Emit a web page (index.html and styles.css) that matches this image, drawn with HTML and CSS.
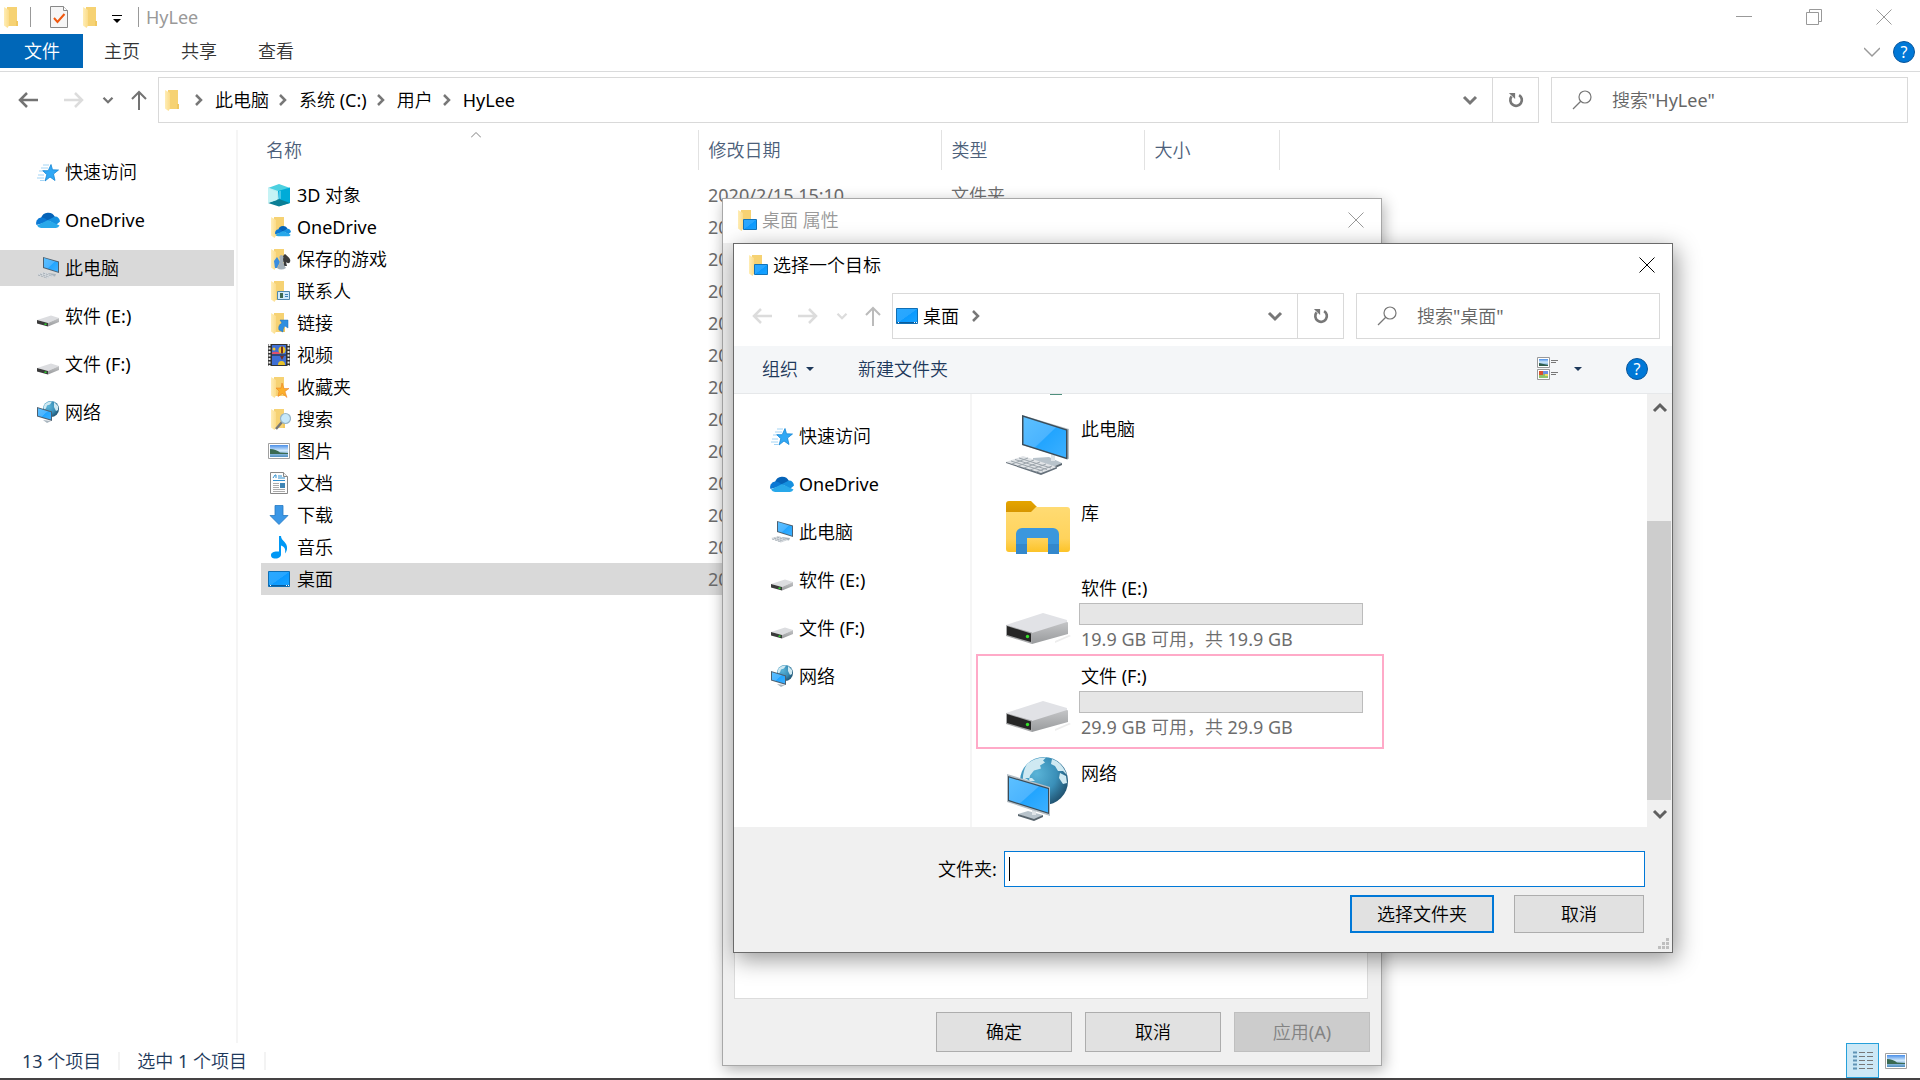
FILE: index.html
```html
<!DOCTYPE html>
<html lang="zh-CN">
<head>
    <meta charset="UTF-8">
    <meta name="viewport" content="width=device-width, initial-scale=1.0">
    <title>HyLee</title>
    <link rel="stylesheet" href="styles.css">
</head>
<body>
    <!-- Icon sprite -->
    <svg class="sprite" aria-hidden="true">
        <defs>
            <linearGradient id="g-screen" x1="0" y1="0" x2="1" y2="1">
                <stop offset="0" stop-color="#5cc0ff"/>
                <stop offset=".5" stop-color="#4bb4ff"/>
                <stop offset=".52" stop-color="#22a5ff"/>
                <stop offset="1" stop-color="#3db0ff"/>
            </linearGradient>
            <linearGradient id="g-desk" x1="0" y1="0" x2="1" y2="1">
                <stop offset="0" stop-color="#2ba9ff"/>
                <stop offset=".5" stop-color="#27a6ff"/>
                <stop offset=".52" stop-color="#0b9aff"/>
                <stop offset="1" stop-color="#1aa3ff"/>
            </linearGradient>
            <linearGradient id="g-folder" x1="0" y1="0" x2="0" y2="1">
                <stop offset="0" stop-color="#ffdb73"/>
                <stop offset=".7" stop-color="#ffd35c"/>
                <stop offset="1" stop-color="#fcc328"/>
            </linearGradient>
            <linearGradient id="g-tab" x1="0" y1="0" x2="0" y2="1">
                <stop offset="0" stop-color="#e5a500"/>
                <stop offset="1" stop-color="#d19000"/>
            </linearGradient>
            <linearGradient id="g-flap" x1="0" y1="0" x2="1" y2="0">
                <stop offset="0" stop-color="#ffedb5"/>
                <stop offset="1" stop-color="#fbdc8a"/>
            </linearGradient>
            <linearGradient id="g-side" x1="0" y1="0" x2="0" y2="1">
                <stop offset="0" stop-color="#c4c5c7"/>
                <stop offset="1" stop-color="#989a9c"/>
            </linearGradient>
            <radialGradient id="g-globe" cx=".35" cy=".35" r=".75">
                <stop offset="0" stop-color="#5ab4d8"/>
                <stop offset=".55" stop-color="#3a8fb8"/>
                <stop offset="1" stop-color="#1d4a66"/>
            </radialGradient>
            <linearGradient id="g-sky" x1="0" y1="0" x2="0" y2="1">
                <stop offset="0" stop-color="#4a8fe8"/>
                <stop offset=".45" stop-color="#cfe8fb"/>
                <stop offset="1" stop-color="#4f8fc0"/>
            </linearGradient>
        </defs>
        <symbol id="i-folder" viewBox="0 0 24 24">
            <path d="M7 2h10v19H7z" fill="#f6d273"/>
            <path d="M16 16h2v5h-2z" fill="#f0c75f"/>
            <path d="M4 2l5 3v15.500L7.500 23 4 20.500z" fill="url(#g-flap)"/>
        </symbol>
        <symbol id="i-cloud" viewBox="0 0 24 24">
            <path d="M5 10a7.500 7.500 0 0 1 14-1l-7 5z" fill="#0563b8"/>
            <path d="M5 9.500a5.500 5.500 0 0 0-4.500 7.500L13 13.500 9 10.500A7 7 0 0 0 5 9.500z" fill="#0a78d4"/>
            <path d="M12 12l7-3.500c3 0 4.600 2 5 5L20 17z" fill="#1590df"/>
            <path d="M1 17.500L12 12l11.500 5.500A4 4 0 0 1 20 20H5a5 5 0 0 1-4-2.500z" fill="#28a8ea"/>
        </symbol>
        <symbol id="i-star" viewBox="0 0 24 24">
            <path d="M7 5h6M5 8h7M3 11h6M2 15h6M1 18h7M4 20.500h4" stroke="#8cc9f2" stroke-width=".8"/>
            <path d="M15 4.500l1.500 5.300 6 .2-5 4 1.500 6.500-5-3.500-5 4 1.800-6.300-4-4h5.400z" fill="#30a8f5" stroke="#1587d4" stroke-width=".8"/>
        </symbol>
        <symbol id="i-pc" viewBox="0 0 24 24">
            <path d="M12 17l8 1-1 2.500-7-1.500z" fill="#aab4bc"/>
            <path d="M7 1l16 4.500V17L7 12z" fill="#4d6070"/>
            <path d="M8 2l14 4.300v9.400L8 11.200z" fill="url(#g-screen)"/>
            <path d="M1 18l8-2 9 4-7 2.500z" fill="#d6dade"/>
            <path d="M2 19l9 3M4 18l9 3M7 17l9 3" stroke="#98a2ab" stroke-width=".8" stroke-dasharray="2 1"/>
        </symbol>
        <symbol id="i-drive" viewBox="0 0 24 24">
            <path d="M1 16l14-4.500 8 2.500-11 5z" fill="#dcdde0"/>
            <path d="M12 19l11-5v4L12 22.500z" fill="url(#g-side)"/>
            <path d="M1 16l11 3v3.500L1 19.500z" fill="#3a3a3a"/>
            <path d="M8.500 19.500h2V21h-2z" fill="#2bd42b"/>
        </symbol>
        <symbol id="i-net" viewBox="0 0 24 24">
            <circle cx="15" cy="9" r="8" fill="url(#g-globe)"/>
            <path d="M9 4q3-3 7-2.500l-2 3-3 1-1 3-2 1q-1-3 1-5.500zM18 2l4 4v4l-2 1-2-4z" fill="#cfe9f2"/>
            <path d="M7 20l8 1-4 2z" fill="#a9b5be"/>
            <path d="M1 7l15 4.500V21L1 16.500z" fill="#4d6070"/>
            <path d="M2 8.300l13 4v7.300L2 15.700z" fill="url(#g-screen)"/>
        </symbol>
        <symbol id="i-cube" viewBox="0 0 24 24">
            <path d="M12 1l11 4-11 4L1 5z" fill="#4cd0e0"/>
            <path d="M1 4.500L11 8v11L1 20z" fill="#b8eef2"/>
            <path d="M11 8l12-3.500V20l-11 3z" fill="#00abd8"/>
            <path d="M1 20l11-4 11 4-11 3.500z" fill="#0a7f96"/>
            <path d="M1 5l9 4v8l-9 3z" fill="#c6f3f5"/>
            <path d="M12 8l2 0v8l-2-.500z" fill="#47c7e8"/>
        </symbol>
        <symbol id="i-chess" viewBox="0 0 24 24">
            <path d="M18 7c5 4 6 6 5 8-1 2-3 1-4 0l1 4h-4l1-4c-4 1-5-3 1-8z" fill="#3c3c3c"/>
            <path d="M7 14l3-4 3 5-3 6-2 0z" fill="#3a8ee0"/>
            <path d="M14 8a2.500 2.500 0 0 1 2 4l1 6 2 3q-5 3-9 0l2-3 1-6a2.500 2.500 0 0 1 1-4z" fill="#a3afb8"/>
        </symbol>
        <symbol id="i-card" viewBox="0 0 24 24">
            <path d="M10.500 12.500h12v8h-12z" fill="#cfeafb" stroke="#5088ac"/>
            <path d="M13 14h3v5h-3z" fill="#3e6a52"/>
            <path d="M18 15.500h3M18 17.500h3" stroke="#3f84b8"/>
        </symbol>
        <symbol id="i-link" viewBox="0 0 24 24">
            <path d="M13 9h8v8l-3-2c-2 2-2 4-2 6l-4-2c-1-4 1-6 3-7z" fill="#2f8fe0" stroke="#1c6cb8" stroke-width=".5"/>
        </symbol>
        <symbol id="i-favstar" viewBox="0 0 24 24">
            <path d="M15 8l2 5.500h5l-4 3 2 6-4.500-4-4.500 3 1-5.500-3-3 5 0z" fill="#fbb02c" stroke="#e8741c" stroke-width=".5"/>
        </symbol>
        <symbol id="i-lens" viewBox="0 0 24 24">
            <path d="M15 15l-6 7" stroke="#777" stroke-width="2.500"/>
            <circle cx="18.500" cy="11.500" r="5" fill="#c7e8fa" stroke="#96b4c6" stroke-width="1.200"/>
        </symbol>
        <symbol id="i-film" viewBox="0 0 24 24">
            <path d="M1 1h22v22H1z" fill="#333"/>
            <path d="M2.500 1v22M21.500 1v22" stroke="#eee" stroke-width="2" stroke-dasharray="2 1.500"/>
            <path d="M5 2h14v20H5z" fill="#3f6fd4"/>
            <path d="M5 12h14" stroke="#222"/>
            <path d="M5 9.500q3-1.500 8 0V11H5z" fill="#e0506c"/>
            <circle cx="15" cy="7" r="3.500" fill="#e8c32c"/>
            <path d="M14 3.500h2v7h-2zM13 13h4l-2 4z" fill="#7a3020"/>
            <circle cx="7" cy="6" r="1.500" fill="#f2c430"/>
            <path d="M11 22a3.500 4 0 0 1 7 0z" fill="#e8c32c"/>
        </symbol>
        <symbol id="i-picture" viewBox="0 0 24 24">
            <path d="M1.500 4.500h21v15h-21z" fill="#fff" stroke="#a0a0a0"/>
            <path d="M3 6h18v12H3z" fill="url(#g-sky)"/>
            <path d="M3 10q6 0 10 3.500 4 0 8 .5v1H3z" fill="#3a6a52"/>
        </symbol>
        <symbol id="i-doc" viewBox="0 0 24 24">
            <path d="M3.500 1.500h13l4 4v17h-17z" fill="#fdfdfd" stroke="#888"/>
            <path d="M16.500 1.500v4h4" fill="#eee" stroke="#888"/>
            <path d="M6 7l2-3h1v3M11 5h4M11 7h7M6 9.500h12" stroke="#2f8fcf" fill="none"/>
            <path d="M6 12.500h6M6 14.500h6M6 16.500h6M6 18.500h12M6 20.500h12" stroke="#aaa"/>
            <path d="M13 12h5v5h-5z" fill="#3f85b5"/>
        </symbol>
        <symbol id="i-download" viewBox="0 0 24 24">
            <path d="M8 2.500h8v10h5L12 21.500 3 12.500h5z" fill="#3b97e6" stroke="#2678c2" stroke-width=".8"/>
        </symbol>
        <symbol id="i-music" viewBox="0 0 24 24">
            <path d="M12 1h2c0 5 7 6 6 13-.300 2-1.300 4-2 4.500 1-5-1-7-4-8v9c0 2-2 4-5.500 4S4 22 4 20s2.500-3.500 6-3.500h2z" fill="#0098f5"/>
        </symbol>
        <symbol id="i-desktop" viewBox="0 0 24 24">
            <path d="M1.500 4.500h21v15h-21z" fill="url(#g-desk)" stroke="#0f6fb5"/>
            <path d="M2 18.500h20" stroke="#0a5c9c"/>
            <path d="M3 18.500h1M19 18.500h1M21 18.500h1" stroke="#fff"/>
        </symbol>
        <symbol id="i-deskfolder" viewBox="0 0 24 24">
            <use href="#i-folder"/>
            <path d="M9.500 11.500h13v10h-13z" fill="url(#g-desk)" stroke="#1274ba"/>
        </symbol>
        <symbol id="i-check" viewBox="0 0 24 24">
            <path d="M3.500 1.500h13l4 4v17h-17z" fill="#f6f6f6" stroke="#888"/>
            <path d="M16.500 1.500v4h4" fill="#fff" stroke="#888"/>
            <path d="M7 13l3.500 4L17.500 9" fill="none" stroke="#f0580f" stroke-width="2"/>
        </symbol>
        <symbol id="i-back" viewBox="0 0 20 20">
            <path d="M9 3L2 10l7 7M2 10h18" fill="none" stroke="currentColor" stroke-width="2.500"/>
        </symbol>
        <symbol id="i-forward" viewBox="0 0 20 20">
            <path d="M11 3l7 7-7 7M18 10H0" fill="none" stroke="currentColor" stroke-width="2.500"/>
        </symbol>
        <symbol id="i-up" viewBox="0 0 20 20">
            <path d="M3 9l7-7 7 7M10 2v18" fill="none" stroke="currentColor" stroke-width="2"/>
        </symbol>
        <symbol id="i-down" viewBox="0 0 16 16">
            <path d="M2 5l6 6 6-6" fill="none" stroke="currentColor" stroke-width="3"/>
        </symbol>
        <symbol id="i-thin" viewBox="0 0 16 16">
            <path d="M0 4l8 8 8-8" fill="none" stroke="currentColor" stroke-width="1.500"/>
        </symbol>
        <symbol id="i-right" viewBox="0 0 12 12">
            <path d="M3 1l5 5-5 5" fill="none" stroke="currentColor" stroke-width="2.500"/>
        </symbol>
        <symbol id="i-refresh" viewBox="0 0 18 18">
            <path d="M12.500 3.500A6.500 6.500 0 1 1 4 5" fill="none" stroke="currentColor" stroke-width="3"/>
            <path d="M1 1h7v7z" fill="currentColor"/>
        </symbol>
        <symbol id="i-search" viewBox="0 0 20 20">
            <circle cx="13" cy="7" r="6" fill="none" stroke="currentColor" stroke-width="1.200"/>
            <path d="M9 11l-8 8" stroke="currentColor" stroke-width="1.200"/>
        </symbol>
        <symbol id="i-close" viewBox="0 0 16 16">
            <path d="M.5.5l15 15M15.500.5l-15 15" stroke="currentColor"/>
        </symbol>
        <symbol id="i-restore" viewBox="0 0 16 16">
            <path d="M.5 3.500h12v12H.5zM3.500 3V.5h12v12H13" fill="none" stroke="currentColor"/>
        </symbol>
        <symbol id="i-min" viewBox="0 0 16 16">
            <path d="M0 7.500h16" stroke="currentColor"/>
        </symbol>
        <symbol id="i-caret" viewBox="0 0 8 4">
            <path d="M0 0h8L4 4z" fill="currentColor"/>
        </symbol>
        <symbol id="i-pc-big" viewBox="0 0 66 66">
            <path d="M28 46l16-1 13 6-9 5-20-5z" fill="#b8c3cb"/>
            <path d="M28 49l20 6 9-4v2l-9 4-20-6z" fill="#59656e"/>
            <path d="M46 42l4 1v6h-4z" fill="#dfe4e8"/>
            <path d="M17 3l47 14v30L17 33z" fill="#b7c0c7"/>
            <path d="M17 3l45.500 14.500v30L17 33z" fill="#3b4c58"/>
            <path d="M18.500 5L61 18.500v27L18.500 32z" fill="url(#g-screen)"/>
            <path d="M1 50l17-6 34 11-16 7z" fill="#e1e4e7"/>
            <path d="M1 50l35 11 16-6v1.500l-16 6.500-35-12z" fill="#66717b"/>
            <path d="M6 49l32 10M10 47.500l32 10M14 46l32 10M7 52l16-6M13 54l16-6M19 56l16-6M25 58l16-6M31 60l16-6" stroke="#9ca5ac" stroke-width="1"/>
        </symbol>
        <symbol id="i-lib" viewBox="0 0 66 66">
            <path d="M1 8a3 3 0 0 1 3-3h22l6 6-4 9H1z" fill="url(#g-tab)"/>
            <path d="M1 16h25l5-5h31a3 3 0 0 1 3 3v39a3 3 0 0 1-3 3H4a3 3 0 0 1-3-3z" fill="url(#g-folder)"/>
            <path d="M11 58V38a6 6 0 0 1 6-6h31a6 6 0 0 1 6 6v20H43V42H22v16z" fill="#3b97dd"/>
            <path d="M11 48h11v10H11zM43 48h11v10H43z" fill="#3488cc"/>
        </symbol>
        <symbol id="i-drive-big" viewBox="0 0 66 66">
            <path d="M50 45l14-6 2 1-16 7z" fill="#ededed"/>
            <path d="M1 29l37-12 24 7v5L27 38z" fill="#e1e2e6"/>
            <path d="M27 37l35-11q1 0 1 1v11L27 48z" fill="url(#g-side)"/>
            <path d="M1 29l26 7.500V48L1 40z" fill="#a8a9ab"/>
            <path d="M2 30l24 7.500V46L2 39z" fill="#262626"/>
            <circle cx="22.500" cy="40.500" r="1.700" fill="#35e02a"/>
        </symbol>
        <symbol id="i-net-big" viewBox="0 0 66 66">
            <circle cx="39" cy="25" r="24" fill="url(#g-globe)"/>
            <path d="M22 8Q30 1 41 1.500l-3 3 2 2-5 3 1 3-7 2-4 5-1 5-6 2q-1-10 4-18.500zM47 3q10 3 15 16l-4-4-5 0-3-5-4-2zM55 17l6 3 1 7-4 1-4-6zM20 22l5 3 5 0-3-3z" fill="#cfe9f2"/>
            <path d="M13 58l10-3 15 4-9 5z" fill="#b8c3cb"/>
            <path d="M13 58l16 5 9-4v2l-9 4-16-5z" fill="#59656e"/>
            <path d="M27 53l4 1v5h-4z" fill="#dfe4e8"/>
            <path d="M2 18l43 13v29L2 46z" fill="#b7c0c7"/>
            <path d="M3 20l41 12v26L3 45z" fill="#3b4c58"/>
            <path d="M4 21.500L43 33v23.500L4 44z" fill="url(#g-screen)"/>
        </symbol>
        <symbol id="i-view" viewBox="0 0 22 24">
            <path d="M.5.5h12v10H.5zM.5 12.500h12v10H.5z" fill="#fff" stroke="#999"/>
            <path d="M2 2h9v7H2z" fill="url(#g-sky)"/>
            <path d="M2 6l9 2v1H2z" fill="#2f5d4c"/>
            <path d="M2 14h9v7H2z" fill="#8fc46a"/>
            <path d="M2 14h4v4H2z" fill="#d8532c"/>
            <path d="M6 14h5v3H6z" fill="#6f8fe0"/>
            <path d="M8 17h3v2H8z" fill="#f4d860"/>
            <path d="M14 3.500h7M14 5.500h5M14 15.500h7M14 17.500h5" stroke="#777"/>
        </symbol>
        <symbol id="i-details" viewBox="0 0 24 24">
            <path d="M2 3.500h4M2 7.500h4M2 11.500h4M2 15.500h4M2 19.500h4" stroke="#5f93b5" stroke-width="2"/>
            <path d="M8 3.500h6M8 7.500h6M8 11.500h6M8 15.500h6M8 19.500h6M16 3.500h6M16 7.500h6M16 11.500h6M16 15.500h6M16 19.500h6" stroke="#777"/>
        </symbol>
    </svg>

    <div class="explorer">
        <header class="titlebar">
            <svg class="icon"><use href="#i-folder"/></svg>
            <span class="bar-sep"></span>
            <button class="quick" aria-label="属性"><svg class="icon"><use href="#i-check"/></svg></button>
            <button class="quick" aria-label="新建文件夹"><svg class="icon"><use href="#i-folder"/></svg></button>
            <button class="quick customize" aria-label="自定义"><svg class="caret-icon"><use href="#i-caret"/></svg></button>
            <span class="bar-sep"></span>
            <h1 class="title">HyLee</h1>
            <div class="window-buttons">
                <button aria-label="最小化"><svg class="glyph"><use href="#i-min"/></svg></button>
                <button aria-label="还原"><svg class="glyph"><use href="#i-restore"/></svg></button>
                <button aria-label="关闭"><svg class="glyph"><use href="#i-close"/></svg></button>
            </div>
        </header>

        <nav class="ribbon">
            <a class="file-tab" href="#">文件</a>
            <a href="#">主页</a>
            <a href="#">共享</a>
            <a href="#">查看</a>
            <div class="ribbon-right">
                <button class="expand" aria-label="展开功能区"><svg class="glyph"><use href="#i-thin"/></svg></button>
                <button class="help">?</button>
            </div>
        </nav>

        <div class="navbar">
            <div class="nav-buttons">
                <button aria-label="返回"><svg class="arrow"><use href="#i-back"/></svg></button>
                <button class="off" aria-label="前进"><svg class="arrow"><use href="#i-forward"/></svg></button>
                <button aria-label="最近的位置"><svg class="small-chev"><use href="#i-down"/></svg></button>
                <button aria-label="上移"><svg class="arrow"><use href="#i-up"/></svg></button>
            </div>
            <div class="address">
                <svg class="icon"><use href="#i-folder"/></svg>
                <svg class="crumb-sep"><use href="#i-right"/></svg>
                <a href="#">此电脑</a>
                <svg class="crumb-sep"><use href="#i-right"/></svg>
                <a href="#">系统 (C:)</a>
                <svg class="crumb-sep"><use href="#i-right"/></svg>
                <a href="#">用户</a>
                <svg class="crumb-sep"><use href="#i-right"/></svg>
                <a href="#">HyLee</a>
                <button class="history" aria-label="历史"><svg class="glyph"><use href="#i-down"/></svg></button>
                <button class="refresh" aria-label="刷新"><svg class="glyph"><use href="#i-refresh"/></svg></button>
            </div>
            <label class="search main-search">
                <svg class="lens"><use href="#i-search"/></svg>
                <input type="text" placeholder='搜索"HyLee"' aria-label="搜索">
            </label>
        </div>

        <div class="content">
            <ul class="tree">
                <li><a href="#"><svg class="icon"><use href="#i-star"/></svg>快速访问</a></li>
                <li><a href="#"><svg class="icon"><use href="#i-cloud"/></svg>OneDrive</a></li>
                <li><a class="selected" href="#"><svg class="icon"><use href="#i-pc"/></svg>此电脑</a></li>
                <li><a href="#"><svg class="icon"><use href="#i-drive"/></svg>软件 (E:)</a></li>
                <li><a href="#"><svg class="icon"><use href="#i-drive"/></svg>文件 (F:)</a></li>
                <li><a href="#"><svg class="icon"><use href="#i-net"/></svg>网络</a></li>
            </ul>

            <div class="files">
                <table>
                    <thead>
                        <tr>
                            <th class="col-name">名称<svg class="sort"><use href="#i-thin"/></svg></th>
                            <th class="col-date">修改日期</th>
                            <th class="col-type">类型</th>
                            <th class="col-size">大小</th>
                        </tr>
                    </thead>
                    <tbody>
                        <tr><td><span class="file"><svg class="icon"><use href="#i-cube"/></svg>3D 对象</span></td><td>2020/2/15 15:10</td><td>文件夹</td><td></td></tr>
                        <tr><td><span class="file"><svg class="icon"><use href="#i-folder"/><use href="#i-cloud" x="8" y="8" width="16" height="16"/></svg>OneDrive</span></td><td>2020/2/15 15:10</td><td>文件夹</td><td></td></tr>
                        <tr><td><span class="file"><svg class="icon"><use href="#i-folder"/><use href="#i-chess"/></svg>保存的游戏</span></td><td>2020/2/15 15:10</td><td>文件夹</td><td></td></tr>
                        <tr><td><span class="file"><svg class="icon"><use href="#i-folder"/><use href="#i-card"/></svg>联系人</span></td><td>2020/2/15 15:10</td><td>文件夹</td><td></td></tr>
                        <tr><td><span class="file"><svg class="icon"><use href="#i-folder"/><use href="#i-link"/></svg>链接</span></td><td>2020/2/15 15:10</td><td>文件夹</td><td></td></tr>
                        <tr><td><span class="file"><svg class="icon"><use href="#i-film"/></svg>视频</span></td><td>2020/2/15 15:10</td><td>文件夹</td><td></td></tr>
                        <tr><td><span class="file"><svg class="icon"><use href="#i-folder"/><use href="#i-favstar"/></svg>收藏夹</span></td><td>2020/2/15 15:10</td><td>文件夹</td><td></td></tr>
                        <tr><td><span class="file"><svg class="icon"><use href="#i-folder"/><use href="#i-lens"/></svg>搜索</span></td><td>2020/2/15 15:10</td><td>文件夹</td><td></td></tr>
                        <tr><td><span class="file"><svg class="icon"><use href="#i-picture"/></svg>图片</span></td><td>2020/2/15 15:10</td><td>文件夹</td><td></td></tr>
                        <tr><td><span class="file"><svg class="icon"><use href="#i-doc"/></svg>文档</span></td><td>2020/2/15 15:10</td><td>文件夹</td><td></td></tr>
                        <tr><td><span class="file"><svg class="icon"><use href="#i-download"/></svg>下载</span></td><td>2020/2/15 15:10</td><td>文件夹</td><td></td></tr>
                        <tr><td><span class="file"><svg class="icon"><use href="#i-music"/></svg>音乐</span></td><td>2020/2/15 15:10</td><td>文件夹</td><td></td></tr>
                        <tr class="selected"><td><span class="file"><svg class="icon"><use href="#i-desktop"/></svg>桌面</span></td><td>2020/2/15 15:10</td><td>文件夹</td><td></td></tr>
                    </tbody>
                </table>
            </div>
        </div>

        <footer class="statusbar">
            <span class="status">13 个项目</span>
            <span class="status">选中 1 个项目</span>
            <div class="view-buttons">
                <button class="active" aria-label="详细信息"><svg class="icon"><use href="#i-details"/></svg></button>
                <button aria-label="大图标"><svg class="icon"><use href="#i-picture"/></svg></button>
            </div>
        </footer>
    </div>

    <!-- Properties window -->
    <section class="window properties">
        <header class="window-title">
            <svg class="icon"><use href="#i-deskfolder"/></svg>
            <h2>桌面 属性</h2>
            <button class="close" aria-label="关闭"><svg class="glyph"><use href="#i-close"/></svg></button>
        </header>
        <div class="properties-body">
            <div class="panel"></div>
            <div class="properties-buttons">
                <button class="btn">确定</button>
                <button class="btn">取消</button>
                <button class="btn" disabled>应用(A)</button>
            </div>
        </div>
    </section>

    <!-- Folder picker -->
    <section class="window picker">
        <header class="window-title">
            <svg class="icon"><use href="#i-deskfolder"/></svg>
            <h2>选择一个目标</h2>
            <button class="close" aria-label="关闭"><svg class="glyph"><use href="#i-close"/></svg></button>
        </header>

        <div class="navbar">
            <div class="nav-buttons">
                <button class="off" aria-label="返回"><svg class="arrow"><use href="#i-back"/></svg></button>
                <button class="off" aria-label="前进"><svg class="arrow"><use href="#i-forward"/></svg></button>
                <button class="off" aria-label="最近的位置"><svg class="small-chev"><use href="#i-down"/></svg></button>
                <button class="dim" aria-label="上移"><svg class="arrow"><use href="#i-up"/></svg></button>
            </div>
            <div class="address">
                <svg class="icon"><use href="#i-desktop"/></svg>
                <a href="#">桌面</a>
                <svg class="crumb-sep"><use href="#i-right"/></svg>
                <button class="history" aria-label="历史"><svg class="glyph"><use href="#i-down"/></svg></button>
                <button class="refresh" aria-label="刷新"><svg class="glyph"><use href="#i-refresh"/></svg></button>
            </div>
            <label class="search">
                <svg class="lens"><use href="#i-search"/></svg>
                <input type="text" placeholder='搜索"桌面"' aria-label="搜索">
            </label>
        </div>

        <div class="toolbar">
            <button class="organize">组织<svg class="caret-icon"><use href="#i-caret"/></svg></button>
            <button>新建文件夹</button>
            <div class="toolbar-right">
                <button class="view-menu" aria-label="更改视图"><svg class="view-icon"><use href="#i-view"/></svg><svg class="caret-icon"><use href="#i-caret"/></svg></button>
                <button class="help">?</button>
            </div>
        </div>

        <div class="picker-body">
            <ul class="tree">
                <li><a href="#"><svg class="icon"><use href="#i-star"/></svg>快速访问</a></li>
                <li><a href="#"><svg class="icon"><use href="#i-cloud"/></svg>OneDrive</a></li>
                <li><a href="#"><svg class="icon"><use href="#i-pc"/></svg>此电脑</a></li>
                <li><a href="#"><svg class="icon"><use href="#i-drive"/></svg>软件 (E:)</a></li>
                <li><a href="#"><svg class="icon"><use href="#i-drive"/></svg>文件 (F:)</a></li>
                <li><a href="#"><svg class="icon"><use href="#i-net"/></svg>网络</a></li>
            </ul>
            <div class="tiles">
                <span class="tile-above"></span>
                <div class="tile">
                    <svg class="big-icon"><use href="#i-pc-big"/></svg>
                    <p>此电脑</p>
                </div>
                <div class="tile">
                    <svg class="big-icon"><use href="#i-lib"/></svg>
                    <p>库</p>
                </div>
                <div class="tile drive">
                    <svg class="big-icon"><use href="#i-drive-big"/></svg>
                    <div>
                        <p>软件 (E:)</p>
                        <div class="usage"></div>
                        <p class="free">19.9 GB 可用，共 19.9 GB</p>
                    </div>
                </div>
                <div class="tile drive marked">
                    <svg class="big-icon"><use href="#i-drive-big"/></svg>
                    <div>
                        <p>文件 (F:)</p>
                        <div class="usage"></div>
                        <p class="free">29.9 GB 可用，共 29.9 GB</p>
                    </div>
                </div>
                <div class="tile">
                    <svg class="big-icon"><use href="#i-net-big"/></svg>
                    <p>网络</p>
                </div>
            </div>
            <div class="scrollbar">
                <button aria-label="向上"><svg class="glyph flip"><use href="#i-down"/></svg></button>
                <div class="thumb"></div>
                <button aria-label="向下"><svg class="glyph"><use href="#i-down"/></svg></button>
            </div>
        </div>

        <div class="picker-footer">
            <div class="folder-row">
                <label for="folder">文件夹:</label>
                <div class="folder-box"><input type="text" id="folder"></div>
            </div>
            <div class="picker-buttons">
                <button class="btn primary">选择文件夹</button>
                <button class="btn">取消</button>
            </div>
            <svg class="grip" viewBox="0 0 12 12"><path d="M8 0h3v3H8zM4 4h3v3H4zM8 4h3v3H8zM0 8h3v3H0zM4 8h3v3H4zM8 8h3v3H8z" fill="#bfbfbf"/></svg>
        </div>
    </section>
</body>
</html>
```
FILE: styles.css
```css
*, *::before, *::after {
    box-sizing: border-box;
}
body {
    margin: 0;
    font-family: 'Noto Sans', 'Noto Sans CJK SC DemiLight', 'Noto Sans CJK SC', sans-serif;
    font-size: 18px;
    font-weight: 400;
    line-height: 24px;
    color: #000;
    background-color: #fff;
    overflow: hidden;
}
h1, h2, p, ul {
    margin: 0;
    padding: 0;
    font-size: 18px;
    font-weight: 400;
}
ul {
    list-style: none;
}
a {
    color: inherit;
    text-decoration: none;
}
button, input {
    font: inherit;
    color: inherit;
    margin: 0;
    padding: 0;
    border: none;
    border-radius: 0;
    background: none;
}
button {
    display: flex;
    align-items: center;
    justify-content: center;
}
svg {
    display: block;
    flex-shrink: 0;
}
.sprite {
    position: absolute;
    width: 0;
    height: 0;
}
.icon {
    width: 24px;
    height: 24px;
}
.glyph {
    width: 16px;
    height: 16px;
}
.arrow, .lens {
    width: 20px;
    height: 20px;
}
.small-chev {
    width: 12px;
    height: 12px;
}
.caret-icon {
    width: 8px;
    height: 4px;
}

/* Explorer window */
.explorer {
    display: flex;
    flex-direction: column;
    min-height: 100vh;
    border-bottom: 2px solid #454344;
}
.titlebar {
    display: flex;
    align-items: center;
    height: 34px;
}
.bar-sep {
    width: 1px;
    height: 20px;
    margin-left: 6px;
    background-color: #999;
}
.quick {
    margin-left: 16px;
}
.quick + .quick {
    margin-left: 8px;
}
.quick.customize {
    width: 10px;
    margin: 4px 10px 0 9px;
    padding-top: 3px;
    border-top: 1px solid #000;
}
.title {
    margin-left: 7px;
    color: #999;
}
.window-buttons {
    display: flex;
    margin-left: auto;
    padding-right: 1px;
}
.window-buttons button {
    width: 70px;
    height: 34px;
    color: #999;
}
.ribbon {
    display: flex;
    gap: 1px;
    align-items: center;
    height: 38px;
    padding-bottom: 3px;
    border-bottom: 1px solid #dadbdc;
    color: #333;
}
.ribbon a {
    padding: 5px 20px;
}
.ribbon .file-tab {
    padding: 5px 23px 5px 24px;
    color: #fff;
    background-color: #0067b8;
}
.ribbon-right {
    display: flex;
    gap: 13px;
    margin-left: auto;
    padding: 2px 5px 0 0;
    color: #999;
}
.help {
    width: 22px;
    height: 22px;
    border: 1px solid #09569c;
    border-radius: 50%;
    background-color: #0078d7;
    color: #fff;
    font-size: 16px;
    line-height: 20px;
}
.navbar {
    display: flex;
    padding: 5px 12px 0 0;
}
.nav-buttons {
    display: flex;
    align-items: center;
    width: 158px;
    padding-left: 18px;
    color: #737373;
}
.nav-buttons button {
    margin-right: 26px;
}
.nav-buttons button:nth-child(2) {
    margin-right: 18px;
}
.nav-buttons button:nth-child(3) {
    margin-right: 15px;
}
.nav-buttons button:last-child {
    margin-right: 0;
}
.nav-buttons .off {
    color: #dcdcdc;
}
.nav-buttons .dim {
    color: #bbb;
}
.address {
    display: flex;
    flex: 1;
    align-items: center;
    height: 46px;
    margin-right: 12px;
    padding-left: 2px;
    border: 1px solid #d9d9d9;
}
.crumb-sep {
    width: 12px;
    height: 12px;
    margin: 0 10px 0 8px;
    color: #777;
}
.history {
    width: 44px;
    height: 44px;
    margin-left: auto;
    color: #777;
}
.refresh {
    width: 46px;
    height: 44px;
    border-left: 1px solid #d9d9d9;
    color: #777;
}
.search {
    display: flex;
    align-items: center;
    width: 304px;
    height: 46px;
    padding-left: 20px;
    border: 1px solid #d9d9d9;
    color: #777;
}
.main-search {
    width: 357px;
}
.search input {
    flex: 1;
    min-width: 0;
    margin-left: 20px;
    outline: none;
}
.search input::placeholder {
    color: #666;
    opacity: 1;
}
.content {
    display: flex;
    flex: 1;
    padding-top: 7px;
}
.tree {
    display: flex;
    flex-direction: column;
    gap: 12px;
    width: 238px;
    padding: 24px 2px 0 0;
    border-right: 2px solid #f5f5f5;
}
.tree a {
    display: flex;
    gap: 5px;
    align-items: center;
    height: 36px;
    padding-left: 36px;
}
.tree .selected, tr.selected {
    background-color: #d9d9d9;
}
.files {
    flex: 1;
    padding-left: 23px;
}
table {
    border-collapse: collapse;
    table-layout: fixed;
    width: 1018px;
}
.col-name {
    width: 437px;
}
.col-date {
    width: 243px;
}
.col-type {
    width: 203px;
}
.col-size {
    width: 135px;
}
th {
    position: relative;
    height: 40px;
    padding: 0 0 0 10px;
    border-right: 1px solid #e2e2e2;
    color: #4c607a;
    font-weight: 400;
    text-align: left;
}
th:first-child {
    padding-left: 5px;
}
.sort {
    position: absolute;
    top: 0;
    left: 48%;
    width: 10px;
    height: 10px;
    color: #777;
    transform: rotate(180deg);
}
tbody::before {
    content: '';
    display: block;
    height: 9px;
}
td {
    height: 32px;
    padding: 0 0 0 10px;
    color: #6d6d6d;
}
td:first-child {
    padding-left: 6px;
    color: #000;
}
.file {
    display: flex;
    gap: 6px;
    align-items: center;
}
.statusbar {
    display: flex;
    align-items: center;
    height: 35px;
    padding-left: 5px;
    color: #1e395b;
}
.status {
    padding: 0 17px;
    border-right: 2px solid #f3f3f3;
    line-height: 18px;
}
.view-buttons {
    display: flex;
    align-self: stretch;
    margin-left: auto;
    padding-right: 8px;
}
.view-buttons button {
    width: 33px;
}
.view-buttons .active {
    border: 1px solid #26a0da;
    background-color: #cce8f6;
}

/* Dialogs */
.window {
    position: absolute;
    background-color: #f0f0f0;
}
.window-title {
    display: flex;
    gap: 4px;
    align-items: center;
    height: 44px;
    padding: 0 17px 2px 11px;
    background-color: #fff;
}
.close {
    margin-left: auto;
}
.properties {
    top: 198px;
    left: 722px;
    width: 660px;
    border: 1px solid #a8a8a8;
    box-shadow: 2px 4px 14px rgba(0, 0, 0, 0.3);
}
.properties .window-title {
    color: #999;
}
.properties-body {
    padding: 9px 11px 13px;
}
.panel {
    min-height: 747px;
    margin-right: 2px;
    border: 1px solid #dcdcdc;
    background-color: #fff;
}
.properties-buttons {
    display: flex;
    gap: 13px;
    justify-content: flex-end;
    margin-top: 13px;
}
.btn {
    height: 38px;
    border: 1px solid #adadad;
    background-color: #e1e1e1;
}
.properties-buttons .btn {
    width: 136px;
    height: 40px;
}
.btn:disabled {
    border-color: #bfbfbf;
    background-color: #ccc;
    color: #838383;
}
.picker {
    top: 243px;
    left: 733px;
    width: 940px;
    border: 1px solid #6a6a6a;
    box-shadow: 3px 6px 22px rgba(0, 0, 0, 0.42);
}
.picker .navbar {
    padding: 5px 12px 7px 0;
    background-color: #fff;
}
.picker .address .icon {
    margin-right: 4px;
}
.picker .crumb-sep {
    margin-left: 11px;
}
.toolbar {
    display: flex;
    align-items: center;
    height: 48px;
    padding: 0 24px 1px 28px;
    border-bottom: 1px solid #e6e8ea;
    background-color: #f4f6f8;
    color: #1e395b;
}
.organize {
    gap: 8px;
    margin-right: 44px;
}
.toolbar-right {
    display: flex;
    gap: 44px;
    align-items: center;
    margin-left: auto;
}
.view-menu {
    gap: 15px;
}
.view-icon {
    width: 22px;
    height: 24px;
}
.picker-body {
    display: flex;
    background-color: #fff;
}
.tiles {
    position: relative;
    flex: 1;
    padding: 14px 0 0 33px;
}
.tile-above {
    position: absolute;
    top: 0;
    left: 78px;
    width: 12px;
    height: 1px;
    background-color: #4f8f7d;
}
.tile {
    display: flex;
    gap: 10px;
    height: 84px;
    padding-top: 4px;
}
.tile p {
    padding-top: 5px;
}
.tile.drive {
    position: relative;
    height: 88px;
    padding-top: 0;
}
.drive p {
    padding-top: 0;
}
.drive .big-icon {
    margin-top: 20px;
}
.tile:last-child {
    height: 75px;
}
.big-icon {
    width: 66px;
    height: 66px;
}
.usage {
    width: 284px;
    height: 22px;
    margin: 3px 0 2px -2px;
    border: 1px solid #bcbcbc;
    background-color: #e6e6e6;
}
.drive .free {
    color: #6d6d6d;
}
.marked::after {
    content: '';
    position: absolute;
    top: -10px;
    left: -29px;
    width: 408px;
    height: 95px;
    border: 2px solid #ffaac8;
}
.scrollbar {
    display: flex;
    flex-direction: column;
    width: 25px;
    background-color: #f0f0f0;
    color: #606060;
}
.scrollbar button {
    height: 27px;
}
.thumb {
    flex: 1;
    margin: 100px 1px 0 0;
    background-color: #cdcdcd;
}
.flip {
    transform: rotate(180deg);
}
.picker-footer {
    position: relative;
    padding: 24px 27px 19px;
}
.folder-row {
    display: flex;
    gap: 7px;
    align-items: center;
    margin-left: 177px;
}
.folder-box {
    position: relative;
    flex: 1;
}
.folder-box::before {
    content: '';
    position: absolute;
    top: 6px;
    left: 5px;
    width: 1px;
    height: 24px;
    background-color: #000;
}
.folder-box input {
    display: block;
    width: 100%;
    height: 36px;
    padding: 0 8px;
    border: 1px solid #0078d7;
    background-color: #fff;
    outline: none;
}
.picker-buttons {
    display: flex;
    gap: 20px;
    justify-content: flex-end;
    margin-top: 8px;
    padding-right: 1px;
}
.picker-buttons .btn {
    width: 130px;
}
.picker-buttons .primary {
    width: 144px;
    border: 2px solid #0078d7;
}
.grip {
    position: absolute;
    right: 2px;
    bottom: 2px;
    width: 12px;
    height: 12px;
}
```
